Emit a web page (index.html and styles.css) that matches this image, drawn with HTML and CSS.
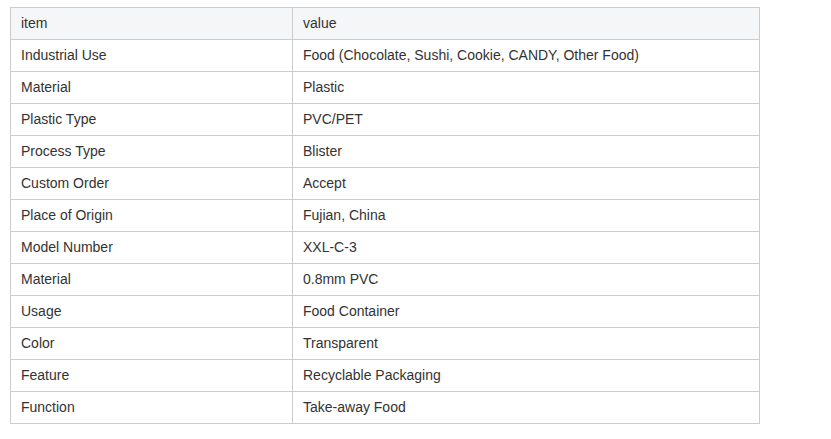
FILE: index.html
```html
<!DOCTYPE html>
<html>
<head>
<meta charset="utf-8">
<link rel="stylesheet" href="styles.css">
</head>
<body>
<table class="spec">
  <thead>
    <tr><th class="c1">item</th><th class="c2">value</th></tr>
  </thead>
  <tbody>
    <tr><td>Industrial Use</td><td>Food (Chocolate, Sushi, Cookie, CANDY, Other Food)</td></tr>
    <tr><td>Material</td><td>Plastic</td></tr>
    <tr><td>Plastic Type</td><td>PVC/PET</td></tr>
    <tr><td>Process Type</td><td>Blister</td></tr>
    <tr><td>Custom Order</td><td>Accept</td></tr>
    <tr><td>Place of Origin</td><td>Fujian, China</td></tr>
    <tr><td>Model Number</td><td>XXL-C-3</td></tr>
    <tr><td>Material</td><td>0.8mm PVC</td></tr>
    <tr><td>Usage</td><td>Food Container</td></tr>
    <tr><td>Color</td><td>Transparent</td></tr>
    <tr><td>Feature</td><td>Recyclable Packaging</td></tr>
    <tr><td>Function</td><td>Take-away Food</td></tr>
  </tbody>
</table>
</body>
</html>
```
FILE: styles.css
```css
html, body {
  margin: 0;
  background: #fff;
}
body {
  padding: 7px 10px;
  font-family: "Liberation Sans", Arial, sans-serif;
  font-size: 14px;
  color: #333;
}
.spec {
  border-collapse: collapse;
  width: 750px;
  table-layout: fixed;
}
.spec th, .spec td {
  border: 1px solid #ccc;
  height: 32px;
  padding: 0 10px 2px;
  box-sizing: border-box;
  text-align: left;
  font-weight: normal;
  vertical-align: middle;
  line-height: 16px;
}
.spec thead th {
  background: #f5f6f8;
}
.spec .c1 {
  width: 282px;
}
```
